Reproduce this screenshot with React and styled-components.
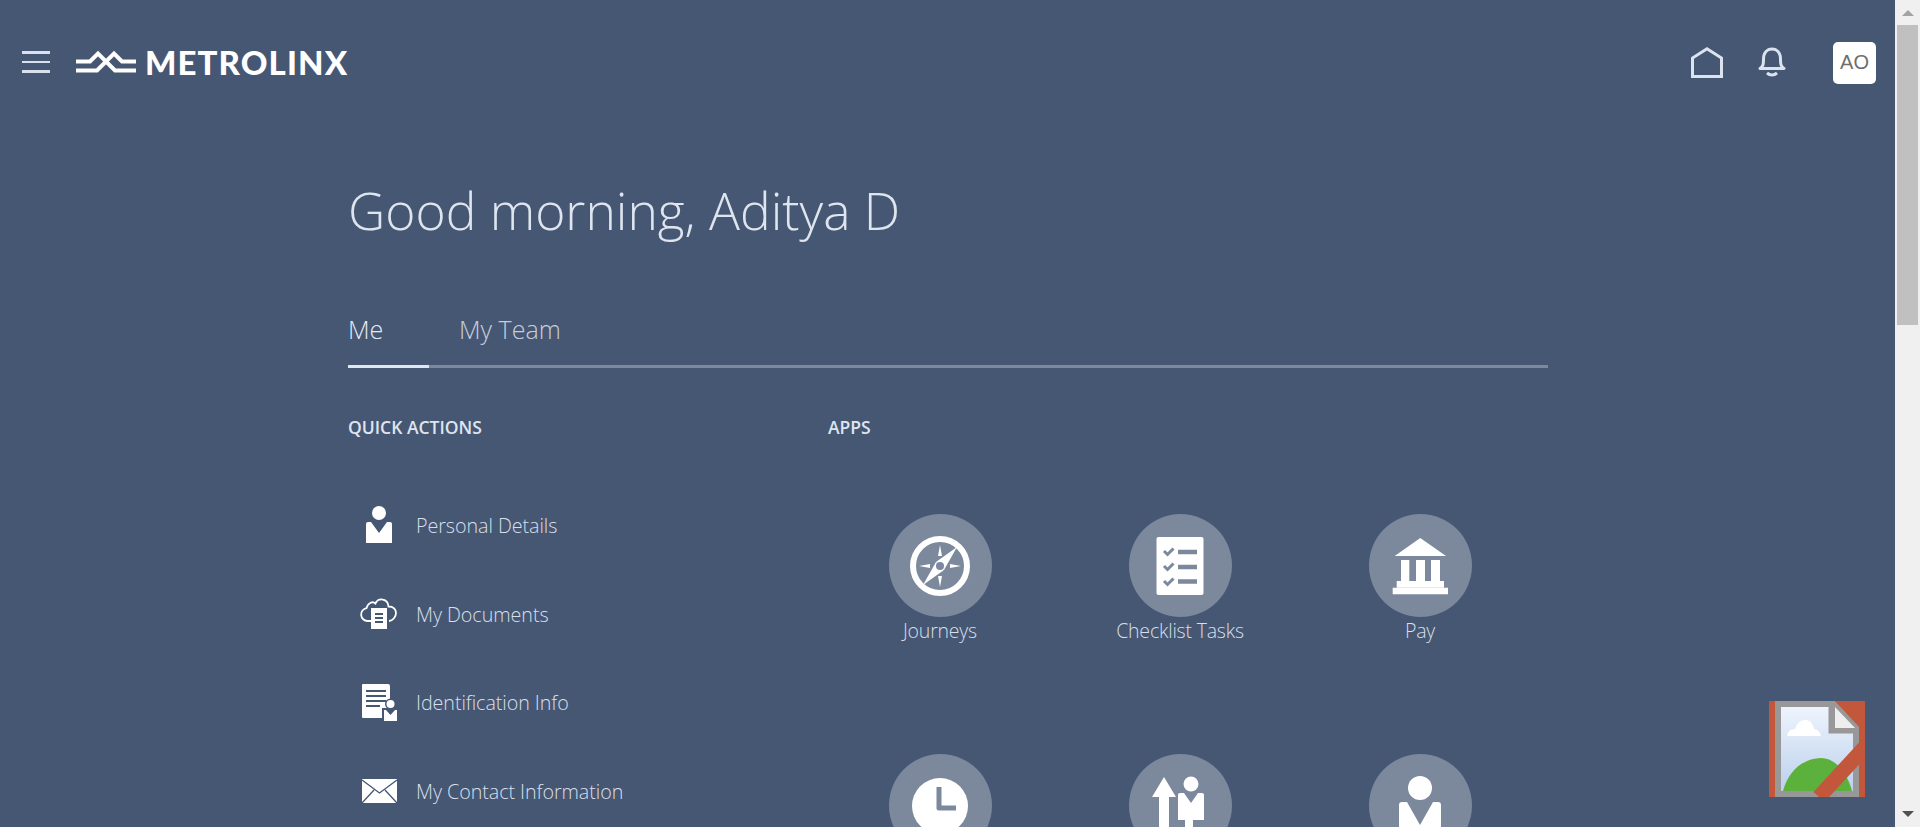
import React from "react";
import styled, { createGlobalStyle } from "styled-components";

const GlobalStyle = createGlobalStyle`
  html, body {
    margin: 0;
    height: 100%;
    overflow: hidden;
  }
  body {
    font-family: "Open Sans", "Noto Sans", sans-serif;
    background: #465773;
    color: #d8dfea;
  }
`;

const quickActions = [
  { label: "Personal Details", icon: <PersonIcon /> },
  { label: "My Documents", icon: <CloudDocIcon /> },
  { label: "Identification Info", icon: <IdDocIcon /> },
  { label: "My Contact Information", icon: <MailIcon /> },
];

const apps = [
  { label: "Journeys", icon: <CompassIcon /> },
  { label: "Checklist Tasks", icon: <ChecklistIcon /> },
  { label: "Pay", icon: <BankIcon /> },
  { label: "", icon: <ClockIcon /> },
  { label: "", icon: <ArrowPersonIcon /> },
  { label: "", icon: <BigPersonIcon /> },
];

function PersonIcon() {
  return (
    <svg width="40" height="40" viewBox="0 0 40 40" fill="#fff">
      <circle cx="20" cy="8" r="7" />
      <path d="M7 19q0-2 2-2h3l8 11 8-11h3q2 0 2 2v19H7z" />
    </svg>
  );
}

function CloudDocIcon() {
  return (
    <svg width="40" height="40" viewBox="0 0 40 40">
      <path
        d="M12 27H8.500a6.500 6.500 0 0 1-1-12.900C9 8.500 14 7 16.500 9.500 19 3.500 29 4 29.500 12.500c5 0 7.500 3 7.500 6.500s-3 8-7 8"
        fill="none"
        stroke="#fff"
        strokeWidth="1.800"
      />
      <rect x="12" y="14" width="16" height="21" fill="#fff" />
      <path d="M16 20h8M16 24h8M16 28h8" stroke="#465773" strokeWidth="1.800" />
    </svg>
  );
}

function IdDocIcon() {
  return (
    <svg width="40" height="40" viewBox="0 0 40 40">
      <path d="M4 1h25q2 0 2 2v32H4q-1 0-1-1V2q0-1 1-1z" fill="#fff" />
      <path d="M7 8h20M7 13h20M7 18h20M7 23h14" stroke="#465773" strokeWidth="2" />
      <circle cx="31.500" cy="21" r="5.500" fill="#465773" />
      <rect x="23" y="25" width="17" height="15" fill="#465773" />
      <circle cx="31.500" cy="21" r="4" fill="#fff" />
      <path d="M25 27h2l4.500 5 4.500-5h2v11H25z" fill="#fff" />
    </svg>
  );
}

function MailIcon() {
  return (
    <svg width="40" height="40" viewBox="0 0 40 40">
      <rect x="3" y="8" width="35" height="24" fill="#fff" />
      <path
        d="M3 9l17.500 13L38 9M3 32l12-13M38 32L26 19"
        fill="none"
        stroke="#465773"
        strokeWidth="1.300"
      />
    </svg>
  );
}

function CompassIcon() {
  return (
    <svg width="64" height="64" viewBox="0 0 64 64">
      <circle cx="32" cy="32" r="27" fill="none" stroke="#fff" strokeWidth="6" />
      <path d="M49 13L36 36l-8-8z" fill="#fff" />
      <path d="M15 51l13-23 8 8z" fill="#fff" />
      <circle cx="32" cy="32" r="4" fill="#7c889c" />
      <path
        d="M32 11l2 11h-4zM32 53l-2-11h4zM11 32l11-2v4zM53 32l-11 2v-4z"
        fill="#fff"
      />
    </svg>
  );
}

function ChecklistIcon() {
  return (
    <svg width="64" height="64" viewBox="0 0 64 64">
      <rect x="8.500" y="3" width="47" height="58" rx="2" fill="#fff" />
      <g fill="none" stroke="#7c889c">
        <path d="M16 17l3.500 3.500 6-6M16 32l3.500 3.500 6-6M16 47l3.500 3.500 6-6" strokeWidth="3" />
        <path d="M30 18h19M30 33h19M30 47.500h19" strokeWidth="4.500" />
      </g>
    </svg>
  );
}

function BankIcon() {
  return (
    <svg width="64" height="64" viewBox="0 0 64 64" fill="#fff">
      <path d="M32.300 4L58 22H6.700z" />
      <path d="M13 26h8.300v21H13zM28 26h9v21h-9zM43 26h9v21h-9z" />
      <path d="M8.700 47h47.300v6.700H8.700z" />
      <path d="M4.700 53.700H60v6.600H4.700z" />
    </svg>
  );
}

function ClockIcon() {
  return (
    <svg width="64" height="64" viewBox="0 0 64 64">
      <circle cx="32" cy="32" r="28" fill="#fff" />
      <path d="M31 13v21h17" fill="none" stroke="#7c889c" strokeWidth="5" strokeLinejoin="round" />
    </svg>
  );
}

function ArrowPersonIcon() {
  return (
    <svg width="64" height="64" viewBox="0 0 64 64" fill="#fff">
      <path d="M16 3L28 23H21V64H11V23H4z" />
      <ellipse cx="43" cy="10" rx="7.500" ry="7.500" />
      <path d="M30 21q0-2 2-2h4l7 10 7-10h4q2 0 2 2v25h-11v18h-8V46H30z" />
    </svg>
  );
}

function BigPersonIcon() {
  return (
    <svg width="64" height="64" viewBox="0 0 64 64" fill="#fff">
      <circle cx="32" cy="14" r="12" />
      <path d="M11 31q0-3 3-3h5l13 23 13-23h5q3 0 3 3v33H11z" />
    </svg>
  );
}

const Page = styled.div`
  display: flex;
  height: 100vh;
`;

const Main = styled.main`
  position: relative;
  flex: 1;
  min-width: 0;
  overflow: hidden;
`;

const Header = styled.header`
  display: flex;
  align-items: center;
  height: 124px;
  padding: 0 19px 0 22px;
`;

const MenuButton = styled.button`
  display: flex;
  flex-direction: column;
  gap: 7px;
  width: 28px;
  margin-right: 26px;
  padding: 0;
  border: 0;
  background: none;
`;

const MenuBar = styled.span`
  height: 2.500px;
  background: #d9e1ee;
`;

const Logo = styled.div`
  display: flex;
  align-items: center;
  gap: 9px;
`;

const LogoText = styled.span`
  font-family: "Lato", sans-serif;
  font-weight: 900;
  font-size: 33px;
  line-height: 1;
  letter-spacing: 1.1px;
  color: #fff;
`;

const HeaderActions = styled.div`
  display: flex;
  align-items: center;
  margin-left: auto;
`;

const HomeButton = styled.div`
  display: flex;
  margin-right: 35px;
`;

const BellButton = styled.div`
  display: flex;
  margin-right: 47px;
`;

const Avatar = styled.div`
  display: flex;
  align-items: center;
  justify-content: center;
  width: 43px;
  height: 42px;
  margin-top: 1px;
  border-radius: 5px;
  background: #fff;
  color: #6e6e6e;
  font-family: "Liberation Sans", sans-serif;
  font-size: 20px;
`;

const Content = styled.div`
  width: 1200px;
  margin-left: 348px;
`;

const Greeting = styled.h1`
  margin: 0;
  padding-top: 55px;
  font-weight: 300;
  font-size: 51.500px;
  line-height: 62px;
  color: #dfe5ef;
`;

const Tabs = styled.nav`
  display: flex;
  margin-top: 71px;
  border-bottom: 3px solid #7c889c;
`;

const Tab = styled.div`
  margin-bottom: -3px;
  padding-bottom: 19px;
  min-width: ${(p) => (p.$active ? "81px" : "auto")};
  margin-right: ${(p) => (p.$active ? "30px" : "0")};
  border-bottom: 3px solid ${(p) => (p.$active ? "#e0e6f0" : "transparent")};
  font-weight: 300;
  font-size: 25px;
  line-height: 34px;
  color: ${(p) => (p.$active ? "#e4e9f2" : "#c6cedc")};
`;

const Columns = styled.div`
  display: grid;
  grid-template-columns: 480px 1fr;
  margin-top: 48px;
`;

const SectionTitle = styled.h2`
  margin: 0;
  font-weight: 600;
  font-size: 17.500px;
  line-height: 22px;
  color: #dfe5ef;
`;

const ActionList = styled.ul`
  margin: 43px 0 0;
  padding: 0;
  list-style: none;
`;

const ActionRow = styled.li`
  display: flex;
  align-items: center;
  gap: 17px;
  height: 88.700px;
  padding-left: 11px;
  font-weight: 300;
  font-size: 19.700px;
  letter-spacing: -0.05px;
`;

const ActionIcon = styled.span`
  display: flex;
`;

const AppGrid = styled.div`
  display: grid;
  grid-template-columns: repeat(3, 240px);
  grid-auto-rows: 240px;
  margin: 76px 0 0 -8px;
`;

const AppTile = styled.div`
  display: flex;
  flex-direction: column;
  align-items: center;
  font-weight: 300;
  font-size: 19.500px;
  letter-spacing: -0.2px;
  line-height: 27px;
`;

const AppCircle = styled.div`
  display: flex;
  align-items: center;
  justify-content: center;
  flex: none;
  width: 103px;
  height: 103px;
  border-radius: 50%;
  background: #7c889c;
`;

const BrokenImage = styled.svg`
  position: absolute;
  right: 30px;
  bottom: 30px;
`;

const ScrollTrack = styled.aside`
  display: flex;
  flex: none;
  flex-direction: column;
  align-items: center;
  width: 25px;
  background: #f0f0f0;
`;

const ScrollArrow = styled.div`
  flex: none;
  width: 0;
  height: 0;
  margin: ${(p) => (p.$down ? "auto 0 10px" : "10px 0 9px")};
  border-left: 6px solid transparent;
  border-right: 6px solid transparent;
  ${(p) => (p.$down ? "border-top: 6px solid #505050;" : "border-bottom: 6px solid #a3a3a3;")}
`;

const ScrollThumb = styled.div`
  flex: none;
  width: 21px;
  height: 300px;
  background: #c0c0c0;
`;

export default function App() {
  return (
    <>
      <GlobalStyle />
      <Page>
        <Main>
          <Header>
            <MenuButton aria-label="Menu">
              <MenuBar />
              <MenuBar />
              <MenuBar />
            </MenuButton>
            <Logo>
              <svg width="60" height="24" viewBox="0 0 60 24" fill="none" stroke="#fff" strokeWidth="4">
                <path d="M0 11.500h14l8-8 17 17h21" />
                <path d="M0 20.500h21l17-17 8 8h14" />
              </svg>
              <LogoText>METROLINX</LogoText>
            </Logo>
            <HeaderActions>
              <HomeButton>
                <svg width="32" height="31" viewBox="0 0 32 31" fill="none" stroke="#dbe3ee" strokeWidth="3">
                  <path d="M1.500 29.500V11L16 1.800 30.500 11v18.500z" />
                </svg>
              </HomeButton>
              <BellButton>
                <svg width="28" height="30" viewBox="0 0 28 30" fill="none" stroke="#dbe3ee" strokeWidth="3">
                  <path d="M2 21.500c3-2 3.500-4 3.500-9C5.500 6 9 2 14 2s8.500 4 8.500 10.500c0 5 .5 7 3.500 9z" strokeLinejoin="round" />
                  <path d="M9 26c3 2.500 7 2.500 10 0" />
                </svg>
              </BellButton>
              <Avatar>AO</Avatar>
            </HeaderActions>
          </Header>

          <Content>
            <Greeting>Good morning, Aditya D</Greeting>
            <Tabs>
              <Tab $active>Me</Tab>
              <Tab>My Team</Tab>
            </Tabs>
            <Columns>
              <section>
                <SectionTitle>QUICK ACTIONS</SectionTitle>
                <ActionList>
                  {quickActions.map((action) => (
                    <ActionRow key={action.label}>
                      <ActionIcon>{action.icon}</ActionIcon>
                      {action.label}
                    </ActionRow>
                  ))}
                </ActionList>
              </section>
              <section>
                <SectionTitle>APPS</SectionTitle>
                <AppGrid>
                  {apps.map((app, i) => (
                    <AppTile key={i}>
                      <AppCircle>{app.icon}</AppCircle>
                      {app.label}
                    </AppTile>
                  ))}
                </AppGrid>
              </section>
            </Columns>
          </Content>

          <BrokenImage width="96" height="96" viewBox="0 0 96 96">
            <defs>
              <linearGradient id="sky" x1="0" y1="0" x2="0" y2="1">
                <stop offset="0" stopColor="#eef4fd" />
                <stop offset="1" stopColor="#bcd0ec" />
              </linearGradient>
            </defs>
            <rect width="96" height="96" fill="#c2573c" />
            <path d="M6 0h60l24 26v70H6z" fill="#989898" />
            <path d="M12 6h50v22h22v62H12z" fill="url(#sky)" />
            <path d="M18 35q1-7 8-7 3-10 12-9 6 2 7 9 6 1 7 7z" fill="#fff" />
            <path d="M14 90c6-22 22-33 38-33 14 0 26 14 31 33z" fill="#5cb13c" />
            <path d="M66 6l20 21H66z" fill="#eeeeee" />
            <path d="M62 0v30h28" fill="none" stroke="#989898" strokeWidth="5" />
            <path d="M66 0h30v27z" fill="#c2573c" />
            <path d="M50 96l46-50" stroke="#c2573c" strokeWidth="15" />
          </BrokenImage>
        </Main>
        <ScrollTrack>
          <ScrollArrow />
          <ScrollThumb />
          <ScrollArrow $down />
        </ScrollTrack>
      </Page>
    </>
  );
}
